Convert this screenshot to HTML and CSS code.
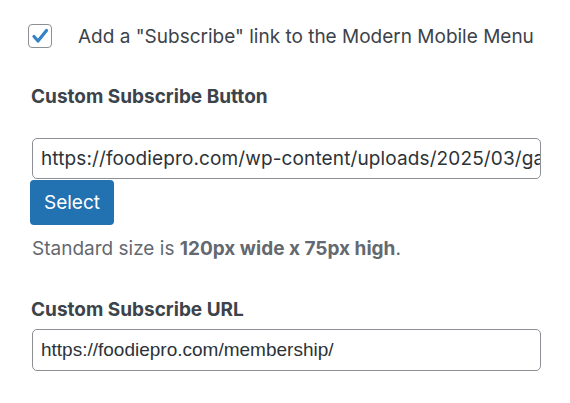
FILE: index.html
```html
<!DOCTYPE html>
<html lang="en">
<head>
<meta charset="utf-8">
<title>Subscribe settings</title>
<link rel="stylesheet" href="styles.css">
</head>
<body>
<div class="panel">
  <label class="check-row">
    <span class="checkbox">
      <svg viewBox="0 0 24 24" width="24" height="24" aria-hidden="true">
        <path d="M6 12.5 L10 17 L18.5 6.5" fill="none" stroke="#3582c4" stroke-width="3.2" stroke-linecap="round" stroke-linejoin="round"/>
      </svg>
    </span>
    <span class="check-text">Add a "Subscribe" link to the Modern Mobile Menu</span>
  </label>

  <div class="field">
    <div class="field-label">Custom Subscribe Button</div>
    <div class="input image-input">https://foodiepro.com/wp-content/uploads/2025/03/ga</div>
    <div class="button">Select</div>
    <p class="desc">Standard size is <strong>120px wide x 75px high</strong>.</p>
  </div>

  <div class="field url-field">
    <div class="field-label">Custom Subscribe URL</div>
    <div class="input">https://foodiepro.com/membership/</div>
  </div>
</div>
</body>
</html>
```
FILE: styles.css
```css
html, body {
  margin: 0;
  padding: 0;
  background: #ffffff;
}
body {
  font-family: Inter, "Noto Sans", "Liberation Sans", sans-serif;
  color: #3c434a;
  font-size: 19px;
  line-height: 23px;
}
.panel {
  padding: 24px 29px 0 30px;
  display: flex;
  flex-direction: column;
}
.check-row {
  display: flex;
  align-items: center;
  gap: 26px;
  margin-left: -2px;
  height: 24px;
}
.checkbox {
  width: 22px;
  height: 22px;
  border: 1px solid #8c8f94;
  border-radius: 4px;
  display: flex;
  align-items: center;
  justify-content: center;
  box-sizing: content-box;
  overflow: hidden;
}
.checkbox svg {
  flex: none;
}
.check-text {
  color: #3c434a;
}
.field {
  display: flex;
  flex-direction: column;
  align-items: flex-start;
}
.field-label {
  font-weight: 700;
  color: #3c434a;
  margin-top: 37px;
  margin-left: 1px;
}
.input {
  box-sizing: border-box;
  width: 509px;
  height: 41px;
  margin-top: 30px;
  margin-left: 2px;
  border: 1px solid #8c8f94;
  border-radius: 5px;
  padding: 0 0 0 8px;
  color: #2c3338;
  line-height: 39px;
  white-space: nowrap;
  overflow: hidden;
}
.image-input {
  letter-spacing: 0.12px;
}
.button {
  margin-top: 1px;
  width: 84px;
  height: 45px;
  box-sizing: border-box;
  background: #2271b1;
  color: #ffffff;
  border-radius: 4px;
  display: flex;
  align-items: center;
  justify-content: center;
}
.desc {
  margin: 12px 0 0 2px;
  color: #646970;
}
.desc strong {
  font-weight: 700;
}
.url-field .field-label {
  margin-top: 38px;
}
.url-field .input {
  margin-top: 8px;
  height: 42px;
  line-height: 40px;
  font-family: "Liberation Sans", Arial, sans-serif;
}
```
